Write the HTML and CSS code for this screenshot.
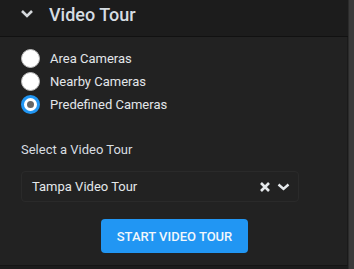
FILE: index.html
```html
<!DOCTYPE html>
<html lang="en">
<head>
    <meta charset="UTF-8">
    <title>Video Tour</title>
    <link rel="stylesheet" href="styles.css">
</head>
<body>
    <div class="frame">
        <div class="panel">
            <div class="panel-header">
                <svg class="chevron" width="14" height="10" viewBox="0 0 14 10">
                    <path d="M2 2 L7 7 L12 2" fill="none" stroke="#d5d9dc" stroke-width="2.6"/>
                </svg>
                <span class="panel-title">Video Tour</span>
            </div>
            <div class="panel-body">
                <label class="radio"><span class="dot"></span>Area Cameras</label>
                <label class="radio"><span class="dot"></span>Nearby Cameras</label>
                <label class="radio"><span class="dot checked"></span>Predefined Cameras</label>

                <div class="field-label">Select a Video Tour</div>
                <div class="select">
                    <span class="select-value">Tampa Video Tour</span>
                    <svg width="12" height="12" viewBox="0 0 12 12">
                        <path d="M2 2 L10 10 M10 2 L2 10" stroke="#e6e9ec" stroke-width="2.6"/>
                    </svg>
                    <svg class="select-arrow" width="13" height="10" viewBox="0 0 13 10">
                        <path d="M1.5 2.5 L6.5 7 L11.5 2.5" fill="none" stroke="#e6e9ec" stroke-width="2.4"/>
                    </svg>
                </div>

                <div class="actions">
                    <button class="start-btn">START VIDEO TOUR</button>
                </div>
            </div>
        </div>
        <div class="scrollbar"></div>
    </div>
</body>
</html>
```

FILE: styles.css
```css
* {
    margin: 0;
    padding: 0;
    box-sizing: border-box;
}

body {
    font-family: Roboto, "Liberation Sans", sans-serif;
    background: #1c1c1c;
    width: 354px;
    height: 269px;
    overflow: hidden;
}

.frame {
    display: flex;
    height: 269px;
}

.panel {
    flex: 1;
    display: flex;
    flex-direction: column;
}

.scrollbar {
    width: 6px;
    background: #3a3a3a;
    border-left: 1px solid #2b2b2b;
}

.panel-header {
    height: 37px;
    display: flex;
    align-items: center;
    padding: 0 0 8px 20px;
    background: #1c1c1c;
    border-bottom: 1px solid #111;
}

.chevron {
    margin-right: 15px;
}

.panel-title {
    font-size: 18px;
    font-weight: 500;
    color: #d6dde2;
}

.panel-body {
    height: 229px;
    background: #222;
    border-right: 1px solid #1a1a1a;
    border-bottom: 1px solid #151515;
    padding: 10px 21px 0 21px;
    display: flex;
    flex-direction: column;
}

.radio {
    display: flex;
    align-items: center;
    height: 23px;
    font-size: 13px;
    color: #e2e6ea;
}

.dot {
    width: 19px;
    height: 19px;
    border-radius: 50%;
    background: #fff;
    border: 1px solid #bbb;
    margin-right: 10px;
}

.dot.checked {
    border: 3px solid #2196f3;
    position: relative;
}

.dot.checked::after {
    content: "";
    position: absolute;
    left: 3px;
    top: 3px;
    width: 7px;
    height: 7px;
    border-radius: 50%;
    background: #666;
}

.field-label {
    margin-top: 26px;
    font-size: 13px;
    color: #d8dde1;
}

.select {
    margin-top: 14px;
    width: 278px;
    height: 31px;
    border: 1px solid #2a2a2a;
    border-radius: 4px;
    display: flex;
    align-items: center;
    padding: 0 8px 0 10px;
    gap: 6px;
}

.select-value {
    flex: 1;
    font-size: 13px;
    color: #e4e8eb;
}

.actions {
    display: flex;
    justify-content: center;
    margin-top: 17px;
    padding-left: 2px;
}

.start-btn {
    width: 147px;
    height: 34px;
    border: none;
    border-radius: 4px;
    background: #2196f3;
    color: #f2f7fb;
    font-family: Roboto, "Liberation Sans", sans-serif;
    font-size: 13px;
    font-weight: 500;
}
```
